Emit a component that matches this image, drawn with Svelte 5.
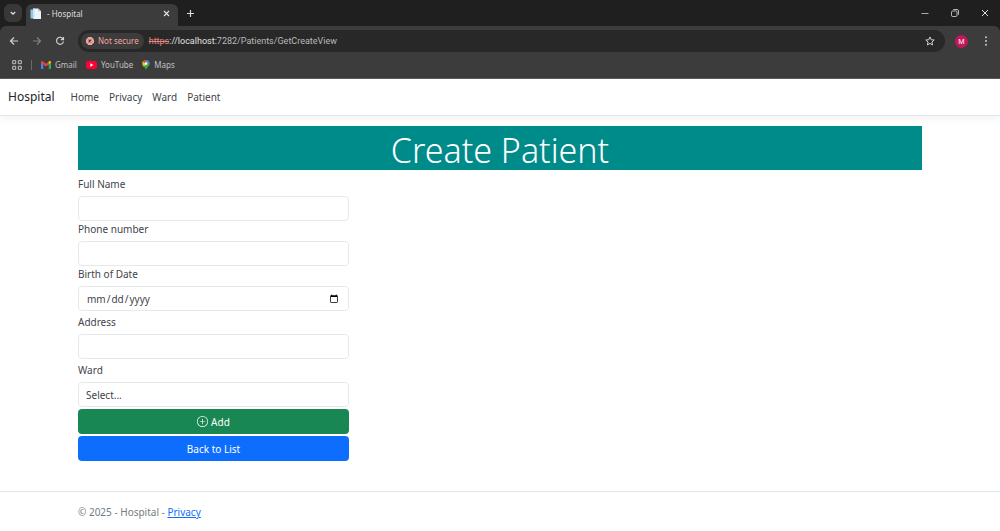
<script>
  let fullName = $state('');
  let phone = $state('');
  let birthDate = $state('');
  let address = $state('');
  let ward = $state('');
  const links = ['Home', 'Privacy', 'Ward', 'Patient'];
</script>

<div class="window">
  <header class="browser">
    <div class="tabs">
      <button class="tab-search" aria-label="Search tabs">
        <svg width="8" height="8" viewBox="0 0 8 8" fill="none" stroke="#e3e3e3" stroke-width="1.3"><path d="M1.8 3l2.2 2.2L6.200 3" /></svg>
      </button>
      <div class="tab">
        <svg width="12" height="12" viewBox="0 0 12 12">
          <path d="M.5 1.500h7v9h-7z" fill="#8cc8ea" />
          <path d="M3 .5h5.200L11 3.300V11H3z" fill="#eef3f6" />
          <path d="M8.200.5v2.800H11z" fill="#b4c4d0" />
          <path d="M3 .5h1.500V11H3z" fill="#c9e3f2" />
        </svg>
        <span class="tab-title">- Hospital</span>
        <button class="bare" aria-label="Close tab">
          <svg width="7" height="7" viewBox="0 0 7 7" stroke="#e3e3e3" stroke-width="1.100"><path d="M1 1l5 5M6 1L1 6" /></svg>
        </button>
      </div>
      <button class="bare new-tab" aria-label="New tab">
        <svg width="9" height="9" viewBox="0 0 9 9" stroke="#dadada" stroke-width="1.200"><path d="M4.500 1v7M1 4.500h7" /></svg>
      </button>
      <div class="controls">
        <button class="bare" aria-label="Minimize">
          <svg width="8" height="8" viewBox="0 0 8 8" stroke="#aaa"><path d="M0.500 4.500h7" /></svg>
        </button>
        <button class="bare" aria-label="Restore">
          <svg width="8" height="8" viewBox="0 0 8 8" fill="none" stroke="#ccc" stroke-width="0.900"><rect x="0.500" y="2" width="5.500" height="5.500" rx="1.200" /><path d="M2.300 0.500H6a1.500 1.500 0 0 1 1.500 1.500v3.700" /></svg>
        </button>
        <button class="bare" aria-label="Close">
          <svg width="8" height="8" viewBox="0 0 8 8" stroke="#ddd"><path d="M1 1l6 6M7 1L1 7" /></svg>
        </button>
      </div>
    </div>

    <div class="toolbar">
      <button class="bare" aria-label="Back">
        <svg width="10" height="10" viewBox="0 0 10 10" fill="none" stroke="#d0d0d0" stroke-width="1.200"><path d="M9 5H1.500M5 1.500L1.500 5 5 8.500" /></svg>
      </button>
      <button class="bare" aria-label="Forward">
        <svg width="10" height="10" viewBox="0 0 10 10" fill="none" stroke="#808080" stroke-width="1.200"><path d="M1 5h7.500M5 1.500L8.500 5 5 8.500" /></svg>
      </button>
      <button class="bare" aria-label="Reload">
        <svg width="10" height="10" viewBox="0 0 10 10" fill="none" stroke="#d0d0d0" stroke-width="1.200"><path d="M8.200 3.200A3.500 3.500 0 1 0 8.500 5.500M8.500 1v2.700H5.800" /></svg>
      </button>
      <div class="address">
        <button class="security">
          <svg width="8" height="8" viewBox="0 0 8 8"><path d="M2.400 0h3.200L8 2.400v3.200L5.600 8H2.400L0 5.600V2.400z" fill="#f2a49c" /><path d="M2.600 2.600l2.800 2.800M5.400 2.600L2.600 5.400" stroke="#3c3c3c" stroke-width="1.100" /></svg>
          Not secure
        </button>
        <span class="url"><s>https</s><b>://localhost:</b>7282/Patients/GetCreateView</span>
        <button class="bare" aria-label="Bookmark this page">
          <svg width="10" height="10" viewBox="0 0 10 10" fill="none" stroke="#d0d0d0" stroke-width="1"><path d="M5 .9l1.200 2.800 3 .3-2.300 2 .7 3L5 7.400 2.400 9l.7-3L.8 4l3-.3z" /></svg>
        </button>
      </div>
      <button class="avatar" aria-label="Profile M">M</button>
      <button class="bare" aria-label="Browser menu">
        <svg width="10" height="10" viewBox="0 0 10 10" fill="#c8c8c8"><circle cx="5" cy="1.200" r="1" /><circle cx="5" cy="5" r="1" /><circle cx="5" cy="8.800" r="1" /></svg>
      </button>
    </div>

    <div class="bookmarks">
      <button class="bare" aria-label="Apps">
        <svg width="10" height="10" viewBox="0 0 10 10" fill="none" stroke="#c4c4c4"><path d="M.7.700h3v3h-3zM6.300.700h3v3h-3zM.700 6.300h3v3h-3zM6.300 6.300h3v3h-3z" /></svg>
      </button>
      <span class="divider"></span>
      <a href="#gmail">
        <svg width="10" height="8" viewBox="0 0 10 8"><path d="M0 1.200V8h2.300V3z" fill="#4285f4" /><path d="M10 1.200V8H7.700V3z" fill="#34a853" /><path d="M0 1.200C0 .1 1.200-.3 2.100.400L5 2.700 7.900.400 7.700 3.400 5 5.500 2.300 3.400 0 1.700z" fill="#ea4335" /><path d="M7.700.600C8.700-.3 10 .1 10 1.300v.4L7.700 3.400z" fill="#fbbc04" /></svg>
        Gmail
      </a>
      <a href="#youtube">
        <svg width="11" height="8" viewBox="0 0 11 8"><rect width="11" height="8" rx="2" fill="#ff0033" /><path d="M4.300 2.200v3.600L7.400 4z" fill="#fff" /></svg>
        YouTube
      </a>
      <a href="#maps">
        <svg width="8" height="10" viewBox="0 0 8 10"><path d="M4 0a3.700 3.700 0 0 1 3.700 3.700C7.700 6 5 7 4 10 3 7 .3 6 .3 3.700A3.700 3.700 0 0 1 4 0z" fill="#34a853" /><path d="M.9 1.600A3.700 3.700 0 0 1 5.200.2L2.400 3.600z" fill="#ea4335" /><path d="M5.200.2A3.700 3.700 0 0 1 7.400 2.300L5 4.200 3.500 2.300z" fill="#4285f4" /><path d="M.9 1.600L2.800 3.200 5 4.500 1.600 6.500C.300 5 0 3.300.9 1.600z" fill="#fbbc04" /><circle cx="4" cy="3.600" r="1.300" fill="#fff" /></svg>
        Maps
      </a>
    </div>
  </header>

  <nav class="site-nav">
    <a class="brand" href="#home">Hospital</a>
    {#each links as link}
      <a href="#{link.toLowerCase()}">{link}</a>
    {/each}
  </nav>

  <main>
    <h1>Create Patient</h1>
    <form onsubmit={(e) => e.preventDefault()}>
      <label for="full-name">Full Name</label>
      <input id="full-name" type="text" bind:value={fullName} />
      <label for="phone">Phone number</label>
      <input id="phone" type="text" bind:value={phone} />
      <label for="birth">Birth of Date</label>
      <input id="birth" type="date" bind:value={birthDate} />
      <label class="spaced" for="address">Address</label>
      <input id="address" type="text" bind:value={address} />
      <label class="spaced" for="ward">Ward</label>
      <select id="ward" bind:value={ward}>
        <option value="">Select...</option>
      </select>
      <button class="btn add" type="submit">
        <svg width="11" height="11" viewBox="0 0 16 16" fill="currentColor"><path d="M8 15A7 7 0 1 1 8 1a7 7 0 0 1 0 14m0 1A8 8 0 1 0 8 0a8 8 0 0 0 0 16" /><path d="M8 4a.5.5 0 0 1 .5.5v3h3a.5.5 0 0 1 0 1h-3v3a.5.5 0 0 1-1 0v-3h-3a.5.5 0 0 1 0-1h3v-3A.5.500 0 0 1 8 4" /></svg>
        Add
      </button>
      <a class="btn back" href="#list">Back to List</a>
    </form>
  </main>

  <footer>© 2025 - Hospital - <a href="#privacy">Privacy</a></footer>
</div>

<style>
  :global(body) {
    margin: 0;
    background: #fff;
  }
  .window {
    display: flex;
    flex-direction: column;
    min-height: 100vh;
    font: 10px/16px 'Noto Sans', 'Open Sans', sans-serif;
    color: #3f4449;
  }
  .window :global(*) {
    box-sizing: border-box;
  }
  svg {
    display: block;
    flex: none;
  }
  button,
  input,
  select {
    font: inherit;
    color: inherit;
    margin: 0;
  }
  a {
    color: inherit;
    text-decoration: none;
  }
  .bare {
    display: flex;
    padding: 0;
    border: 0;
    background: none;
  }

  .browser {
    background: #1f1f1f;
    color: #c0c0c0;
    font-size: 8px;
    border-bottom: 1px solid #5a5a5a;
  }
  .tabs {
    display: flex;
    align-items: center;
    height: 26px;
    padding: 0 11px 0 4px;
  }
  .tab-search {
    display: flex;
    align-items: center;
    justify-content: center;
    width: 18px;
    height: 18px;
    padding: 0;
    border: 0;
    border-radius: 6px;
    background: #383838;
  }
  .tab {
    display: flex;
    align-items: center;
    gap: 5px;
    align-self: flex-end;
    width: 152px;
    height: 22px;
    margin-left: 4px;
    padding: 0 8px 3px 4px;
    border-radius: 6px 6px 0 0;
    background: #3c3c3c;
    color: #dedede;
  }
  .tab-title {
    flex: 1;
  }
  .new-tab {
    margin-left: 8px;
  }
  .controls {
    display: flex;
    gap: 22px;
    margin-left: auto;
  }
  .toolbar {
    display: flex;
    align-items: center;
    gap: 13px;
    height: 30px;
    padding: 0 9px;
    border-radius: 6px 6px 0 0;
    background: #3c3c3c;
  }
  .address {
    flex: 1;
    display: flex;
    align-items: center;
    gap: 5px;
    height: 22px;
    margin-right: -3px;
    padding: 0 10px 0 3px;
    border-radius: 11px;
    background: #282828;
  }
  .security {
    display: flex;
    align-items: center;
    gap: 4px;
    height: 16px;
    padding: 0 5px;
    border: 0;
    border-radius: 8px;
    background: #3c3c3c;
    color: #f2a49c;
  }
  .url {
    flex: 1;
    font-family: Roboto, 'Noto Sans', sans-serif;
    font-size: 9px;
    color: #b8b8b8;
  }
  .url s {
    color: #e3877d;
  }
  .url b {
    font-weight: 400;
    color: #e0e0e0;
  }
  .avatar {
    width: 13px;
    height: 13px;
    padding: 0;
    border: 0;
    border-radius: 50%;
    background: #c2185b;
    color: #fff;
    font-size: 7px;
    line-height: 13px;
  }
  .bookmarks {
    display: flex;
    align-items: center;
    gap: 9px;
    height: 22px;
    padding: 0 12px 4px;
    background: #3c3c3c;
  }
  .bookmarks a {
    display: flex;
    align-items: center;
    gap: 4px;
  }
  .divider {
    width: 1px;
    height: 10px;
    background: #6a6a6a;
  }

  .site-nav {
    display: flex;
    align-items: center;
    gap: 10px;
    height: 37px;
    padding: 0 8px;
    border-bottom: 1px solid #e4e7ea;
    box-shadow: 0 3px 8px rgba(0, 0, 0, 0.05);
  }
  .brand {
    margin-right: 6px;
    font-size: 12px;
    color: #212529;
  }

  main {
    flex: 1;
    padding: 10px 78px 0;
  }
  h1 {
    height: 44px;
    margin: 0 0 6px;
    background: #008b8b;
    color: #fff;
    font-size: 34px;
    font-weight: 300;
    line-height: 48px;
    text-align: center;
  }
  form {
    display: flex;
    flex-direction: column;
    width: 32.1%;
    min-width: 200px;
  }
  label {
    margin-bottom: 4px;
  }
  .spaced {
    margin-top: 3px;
  }
  input,
  select {
    appearance: none;
    width: 100%;
    height: 25px;
    padding: 0 7px;
    border: 1px solid #e6e9ec;
    border-radius: 4px;
    background: #fff;
  }
  .btn {
    display: flex;
    align-items: center;
    justify-content: center;
    gap: 3px;
    height: 25px;
    margin-top: 2px;
    border: 0;
    border-radius: 4px;
    color: #fff;
  }
  .add {
    background: #198754;
  }
  .back {
    background: #0d6efd;
  }

  footer {
    padding: 12px 78px 11px;
    border-top: 1px solid #e4e7ea;
    color: #757b81;
  }
  footer a {
    color: #0d6efd;
    text-decoration: underline;
  }
</style>
